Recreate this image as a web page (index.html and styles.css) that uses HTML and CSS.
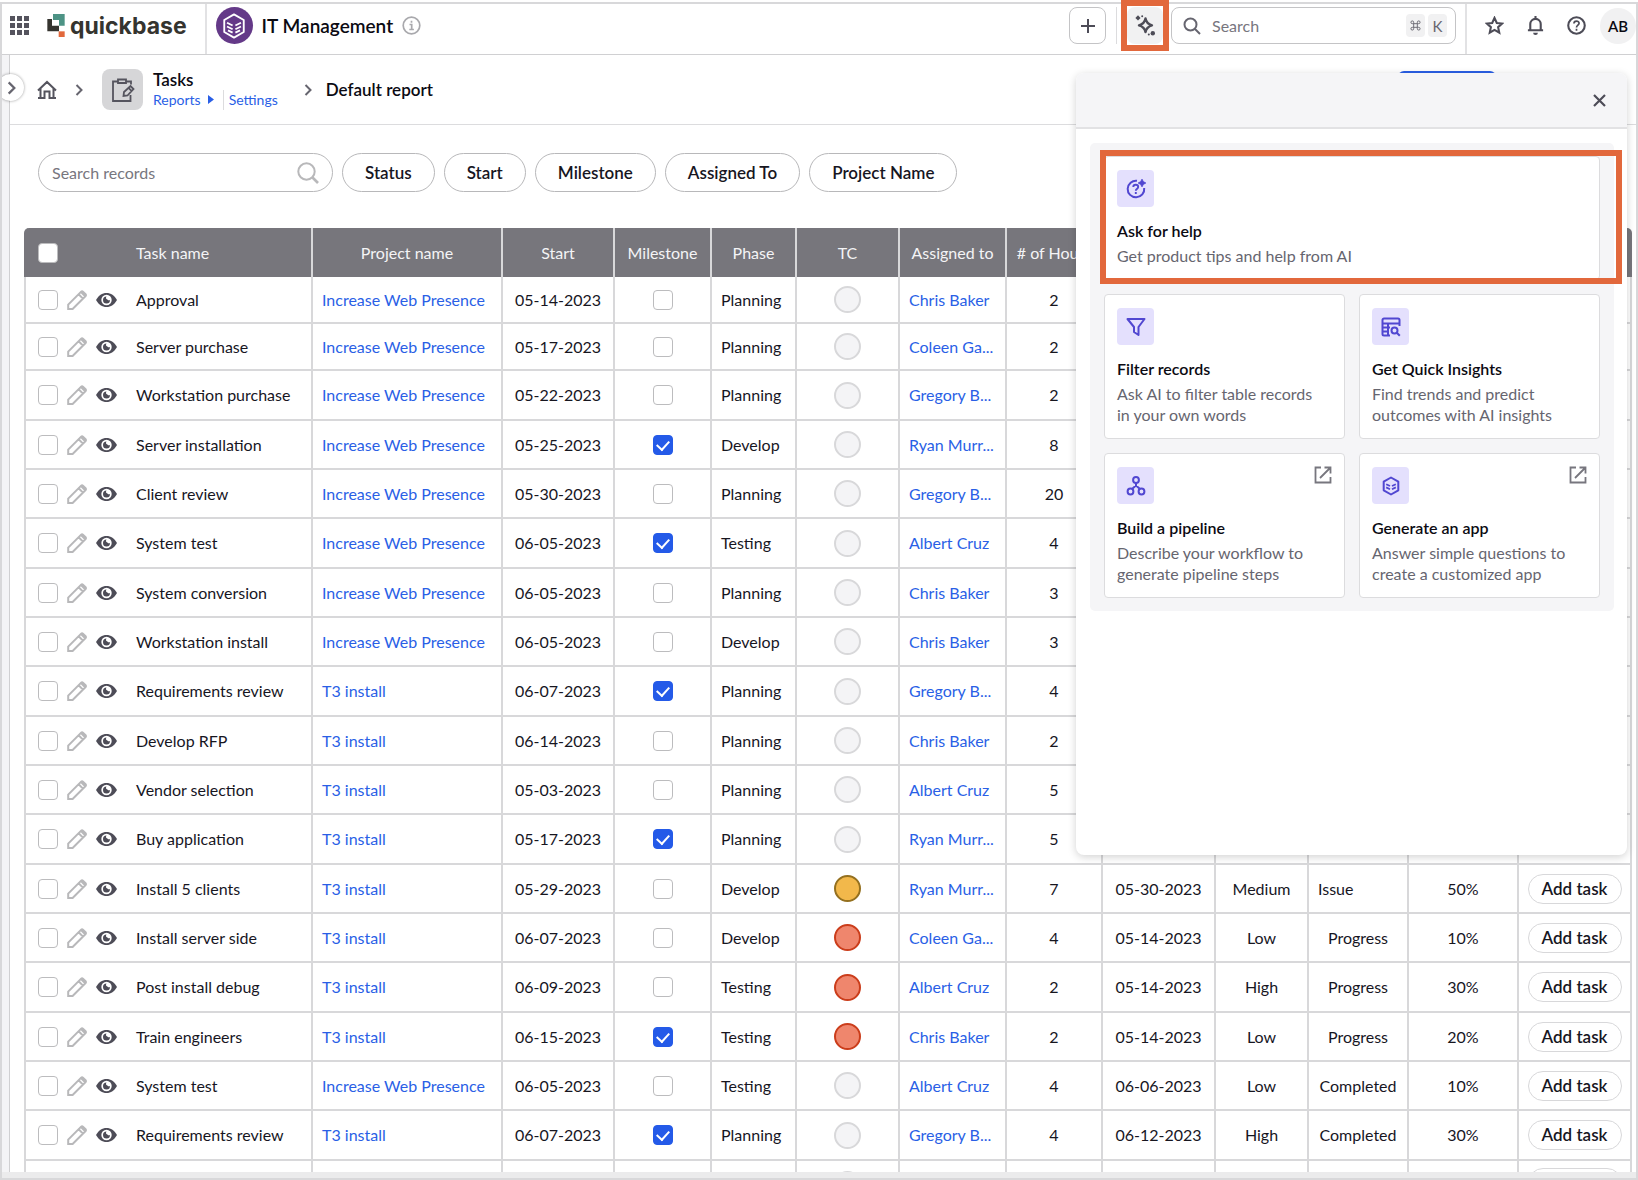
FILE: index.html
```html
<!DOCTYPE html>
<html lang="en">
<head>
    <meta charset="UTF-8">
    <meta name="viewport" content="width=device-width, initial-scale=1.0">
    <title>IT Management - Tasks</title>
    <link rel="stylesheet" href="styles.css">
</head>
<body>
    <!-- shared icons -->
    <svg class="sprite" aria-hidden="true">
        <symbol id="i-pencil" viewBox="0 0 20 20"><path d="M1.200 19v-4.400L14.200 1.600a1.200 1.200 0 0 1 1.700 0l2.700 2.700a1.200 1.200 0 0 1 0 1.700L5.600 19zM11.600 4.200l4.400 4.400M14 2l4.200 4.200" fill="none" stroke="#b8b8ba" stroke-width="2"/></symbol>
        <symbol id="i-eye" viewBox="0 0 21 14"><path d="M0 7C2.500 2.500 6.200 0 10.500 0S18.500 2.500 21 7c-2.500 4.500-6.200 7-10.500 7S2.500 11.500 0 7z" fill="#4d4c57"/><circle cx="10.500" cy="7" r="5.200" fill="#fff"/><path d="M10.500 3.500a3.500 3.500 0 1 0 3.500 3.500 2 2 0 0 1-2.600-.5 2 2 0 0 1-.9-3z" fill="#4d4c57"/></symbol>
        <symbol id="i-chevron" viewBox="0 0 8 12"><path d="M1.500 1l5 5-5 5" fill="none" stroke="#66656f" stroke-width="2"/></symbol>
        <symbol id="i-out" viewBox="0 0 18 18"><path d="M7 1.500H1.500v15h15V11M10.500 1.500h6v6M16.500 1.500L6 12" fill="none" stroke="#77767e" stroke-width="1.800"/></symbol>
        <symbol id="i-cube" viewBox="0 0 24 28"><path d="M12 1.500l10.500 6v13L12 26.500l-10.500-6v-13z" fill="none" stroke="currentColor" stroke-width="2" stroke-linejoin="round"/><path d="M4.500 10.500l6 3M4.500 14.500l6 3M5.500 18.800l5 2.400M19.500 10.500l-6 3M19.500 14.500l-6 3M18.500 18.800l-5 2.400" fill="none" stroke="currentColor" stroke-width="2"/></symbol>
        <symbol id="i-cube-sm" viewBox="0 0 18 20"><path d="M9 1.500l7.300 4.200v8.600L9 18.500l-7.300-4.200V5.700z" fill="none" stroke="currentColor" stroke-width="2" stroke-linejoin="round"/><path d="M4.200 8.200L8 10M4.200 11.400L8 13.200M13.800 8.200L10 10M13.800 11.400L10 13.200" fill="none" stroke="currentColor" stroke-width="1.800"/></symbol>
    </svg>

    <div class="frame">
        <header class="topbar">
            <button class="icon-btn apps" aria-label="Apps">
                <svg width="19" height="19" viewBox="0 0 19 19" fill="#55545e"><path d="M0 0h5v5H0zM7 0h5v5H7zM14 0h5v5h-5zM0 7h5v5H0zM7 7h5v5H7zM14 7h5v5h-5zM0 14h5v5H0zM7 14h5v5H7zM14 14h5v5h-5z"/></svg>
            </button>
            <a href="#" class="logo">
                <svg width="18" height="23" viewBox="140 42 52 69"><path d="M157 42h35v35h-17V60h-18z" fill="#4d9385"/><path d="M140 57h14v20h21v17h-35z" fill="#35342f"/><path d="M174 94h18v17h-18z" fill="#e2683c"/></svg>
                <span>quickbase</span>
            </a>
            <div class="app">
                <span class="app-icon"><svg width="24" height="26"><use href="#i-cube"/></svg></span>
                <h1>IT Management</h1>
                <svg width="19" height="19" viewBox="0 0 19 19" fill="none" stroke="#a9a9ad" stroke-width="1.700"><circle cx="9.500" cy="9.500" r="8.300"/><path d="M7.500 8.500h2.200v5M7.300 13.500h4.600M9.500 4.700v2"/></svg>
            </div>
            <div class="tools">
                <button class="add-btn" aria-label="New"><svg width="14" height="14" viewBox="0 0 14 14"><path d="M7 0v14M0 7h14" stroke="#4d4c57" stroke-width="2"/></svg></button>
                <button class="ai-btn" aria-label="AI assistant">
                    <svg width="21" height="21" viewBox="0 0 21 21"><path d="M10.500 3.500c.7 4 2.500 5.700 6.500 6.800-4 1.100-5.800 2.800-6.500 6.800-.7-4-2.500-5.700-6.500-6.800 4-1.100 5.800-2.800 6.500-6.800z" fill="none" stroke="#4d4c57" stroke-width="2.400" stroke-linejoin="round"/><path d="M3 .300l2.600 2.600L3 5.500.400 2.900z" fill="#4d4c57"/><circle cx="7.200" cy="1.300" r="1" fill="#4d4c57"/><circle cx="13.800" cy="19.500" r="1" fill="#4d4c57"/><circle cx="17.800" cy="18.300" r="2.200" fill="#4d4c57"/></svg>
                </button>
                <label class="global-search">
                    <svg width="18" height="18" viewBox="0 0 18 18" fill="none" stroke="#66656f" stroke-width="2"><circle cx="7.500" cy="7.500" r="6"/><path d="M12 12l5 5"/></svg>
                    <input type="text" placeholder="Search" aria-label="Search">
                    <kbd><svg width="11" height="11" viewBox="0 0 12 12" fill="none" stroke="#66656f" stroke-width="1"><path d="M4 4h4v4H4zM4 4V2.500A1.500 1.500 0 1 0 2.500 4H4M8 4h1.500A1.500 1.500 0 1 0 8 2.500V4M8 8v1.500A1.500 1.500 0 1 0 9.500 8H8M4 8H2.500A1.500 1.500 0 1 0 4 9.500V8"/></svg></kbd>
                    <kbd>K</kbd>
                </label>
            </div>
            <nav class="user">
                <button class="icon-btn" aria-label="Favorites"><svg width="19" height="19" viewBox="0 0 20 20"><path d="M10 2l2.400 5.300 5.600.6-4.200 3.900 1.200 5.700-5-2.900-5 2.900 1.200-5.700L2 7.900l5.600-.6z" fill="none" stroke="#4d4c57" stroke-width="2.200"/></svg></button>
                <button class="icon-btn" aria-label="Notifications"><svg width="19" height="19" viewBox="0 0 20 20"><path d="M2 15h16M4.500 15V8.500a5.500 5.500 0 0 1 11 0V15M10 0v3" fill="none" stroke="#4d4c57" stroke-width="2.200"/><path d="M7.500 17.500h5a2.500 2.500 0 0 1-5 0z" fill="#4d4c57"/></svg></button>
                <button class="icon-btn" aria-label="Help"><svg width="19" height="19" viewBox="0 0 20 20" fill="none" stroke="#4d4c57" stroke-width="2.200"><circle cx="10" cy="10" r="8.700"/><path d="M7.300 8c0-3.600 5.400-3.400 5.400-.3C12.700 9.500 10 9.700 10 12M10 13.500v2" stroke-width="1.800"/></svg></button>
                <button class="avatar">AB</button>
            </nav>
        </header>

        <div class="body">
            <aside class="rail">
                <button class="expand" aria-label="Expand navigation"><svg width="9" height="14"><use href="#i-chevron"/></svg></button>
            </aside>
            <main>
                <div class="crumbs">
                    <a href="#" class="home" aria-label="Home"><svg width="20" height="20" viewBox="0 0 20 20" fill="none" stroke="#55545e" stroke-width="2"><path d="M1 10.500L10 2l9 8.500M3.500 8.500V18H1M16.500 8.500V18H19M3 18h4.500v-6.500h5V18H17"/></svg></a>
                    <svg width="8" height="12"><use href="#i-chevron"/></svg>
                    <span class="tile"><svg width="24" height="24" viewBox="0 0 24 24" fill="none" stroke="#55545e" stroke-width="1.800"><path d="M7 3.500H2V23h17.500v-6M15 3.500h5v3M7 1.500h8V5H7zM12.500 18l.5-4 6.500-6 3 3-6 6.500zM17.500 9.800l3 3"/></svg></span>
                    <div class="table-nav">
                        <strong>Tasks</strong>
                        <div class="links">
                            <a href="#">Reports</a>
                            <svg width="6" height="9" viewBox="0 0 6 9"><path d="M0 0l6 4.500L0 9z" fill="#2a5fe6"/></svg>
                            <a href="#" class="settings">Settings</a>
                        </div>
                    </div>
                    <svg width="8" height="12"><use href="#i-chevron"/></svg>
                    <strong class="report">Default report</strong>
                    <button class="new-btn" aria-label="New task"></button>
                </div>

                <div class="filters">
                    <label class="record-search">
                        <input type="text" placeholder="Search records" aria-label="Search records">
                        <svg width="22" height="22" viewBox="0 0 22 22" fill="none" stroke="#b8b8ba" stroke-width="2"><circle cx="9.500" cy="9.500" r="8.200"/><path d="M15.500 15.500l5.500 5.500" stroke-width="2.600"/></svg>
                    </label>
                    <button class="pill">Status</button>
                    <button class="pill">Start</button>
                    <button class="pill">Milestone</button>
                    <button class="pill">Assigned To</button>
                    <button class="pill">Project Name</button>
                </div>

                <div class="table-wrap">
                    <table>
                        <colgroup>
                            <col class="c-task"><col class="c-project"><col class="c-start"><col class="c-mile"><col class="c-phase"><col class="c-tc"><col class="c-who"><col class="c-hours"><col class="c-end"><col class="c-prio"><col class="c-status"><col class="c-done"><col class="c-add">
                        </colgroup>
                        <thead>
                            <tr>
                                <th><div class="task"><input type="checkbox" class="check" aria-label="Select all"><span class="name">Task name</span></div></th>
                                <th>Project name</th>
                                <th>Start</th>
                                <th>Milestone</th>
                                <th>Phase</th>
                                <th>TC</th>
                                <th>Assigned to</th>
                                <th># of Hours</th>
                                <th></th>
                                <th></th>
                                <th></th>
                                <th></th>
                                <th></th>
                            </tr>
                        </thead>
                        <tbody id="rows"></tbody>
                    </table>
                </div>
            </main>
        </div>

        <section class="panel" aria-label="AI assistant">
            <div class="panel-head">
                <button class="icon-btn" aria-label="Close"><svg width="13" height="13" viewBox="0 0 13 13"><path d="M1 1l11 11M12 1L1 12" stroke="#4d4c57" stroke-width="2.200"/></svg></button>
            </div>
            <div class="cards">
                <a href="#" class="card wide">
                    <span class="badge"><svg width="20" height="20" viewBox="0 0 20 20" fill="none" stroke="#5147d1" stroke-width="2"><path d="M11 1.800A8.300 8.300 0 1 0 18.200 9"/><path d="M7.300 8c0-3 4.900-3 4.900 0 0 1.700-2.400 1.700-2.400 3.800M9.800 13v1.900" stroke-width="1.900"/><path d="M16 0l1.400 2.600L20 4l-2.600 1.400L16 8l-1.400-2.600L12 4l2.600-1.400z" fill="#5147d1" stroke="#5147d1" stroke-width=".6"/></svg></span>
                    <strong>Ask for help</strong>
                    <span class="desc">Get product tips and help from AI</span>
                </a>
                <a href="#" class="card">
                    <span class="badge"><svg width="20" height="20" viewBox="0 0 20 20"><path d="M1.500 2h17L12.500 10v8L8 15v-5z" fill="none" stroke="#5147d1" stroke-width="2" stroke-linejoin="round"/></svg></span>
                    <strong>Filter records</strong>
                    <span class="desc">Ask AI to filter table records in your own words</span>
                </a>
                <a href="#" class="card">
                    <span class="badge"><svg width="20" height="20" viewBox="0 0 20 20" fill="none" stroke="#5147d1" stroke-width="2"><path d="M18.500 9V3a1.500 1.500 0 0 0-1.500-1.500H3A1.500 1.500 0 0 0 1.500 3v14A1.500 1.500 0 0 0 3 18.500h6M1.500 6.500h17M7 6.500v12M1.500 10.500H9M1.500 14.500H7"/><circle cx="13.500" cy="13.500" r="3"/><path d="M15.800 15.800l3 3"/></svg></span>
                    <strong>Get Quick Insights</strong>
                    <span class="desc">Find trends and predict outcomes with AI insights</span>
                </a>
                <a href="#" class="card">
                    <span class="badge"><svg width="20" height="20" viewBox="0 0 20 20" fill="none" stroke="#5147d1" stroke-width="2"><circle cx="10" cy="4" r="2.900"/><circle cx="4.500" cy="15.500" r="2.900"/><circle cx="15.500" cy="15.500" r="2.900"/><path d="M10 7v3M10 9.500l-4 3.500M10 9.500l4 3.500"/></svg></span>
                    <svg class="out" width="18" height="18"><use href="#i-out"/></svg>
                    <strong>Build a pipeline</strong>
                    <span class="desc">Describe your workflow to generate pipeline steps</span>
                </a>
                <a href="#" class="card">
                    <span class="badge"><svg width="18" height="20"><use href="#i-cube-sm"/></svg></span>
                    <svg class="out" width="18" height="18"><use href="#i-out"/></svg>
                    <strong>Generate an app</strong>
                    <span class="desc">Answer simple questions to create a customized app</span>
                </a>
            </div>
        </section>
    </div>

    <script src="script.js"></script>
</body>
</html>
```

FILE: styles.css
```css
* {
    box-sizing: border-box;
}
body {
    margin: 0;
    overflow: hidden;
    background: #fff;
    color: #17161f;
    font-family: Lato, "Open Sans", sans-serif;
    font-size: 16px;
    line-height: 20px;
}
button, input {
    font: inherit;
    color: inherit;
}
button {
    cursor: pointer;
    background: none;
    border: none;
    padding: 0;
}
svg {
    display: block;
    flex: none;
}
a {
    color: #2a5fe6;
    text-decoration: none;
}
strong {
    font-weight: 600;
    color: #0b0a12;
}
.sprite {
    position: absolute;
    width: 0;
    height: 0;
}
.frame {
    position: relative;
    display: flex;
    flex-direction: column;
    height: calc(100vh - 2px);
    margin-top: 2px;
    border: 2px solid #d8d8da;
}

/* top bar */
.topbar {
    display: flex;
    flex: none;
    height: 51px;
    border-bottom: 1px solid #d0d0d2;
}
.topbar > * {
    padding-top: 3px;
    padding-bottom: 10px;
}
.icon-btn {
    display: flex;
    align-items: center;
    justify-content: center;
}
.apps {
    padding-left: 8px;
}
.logo {
    display: flex;
    align-items: center;
    gap: 5px;
    padding-left: 18px;
    padding-right: 18px;
    border-right: 2px solid #e2e2e4;
    color: #35342f;
    font-family: Inter, sans-serif;
    font-size: 23px;
    font-weight: 700;
}
.app {
    display: flex;
    align-items: center;
    gap: 9px;
    padding-left: 9px;
}
.app-icon {
    display: flex;
    align-items: center;
    justify-content: center;
    width: 37px;
    height: 37px;
    border-radius: 50%;
    background: #643988;
    color: #fff;
}
h1 {
    margin: 0;
    font-size: 19px;
    font-weight: 600;
    color: #0b0a12;
}
.tools {
    display: flex;
    margin-left: auto;
    padding-right: 9px;
    border-right: 2px solid #e2e2e4;
}
.add-btn {
    display: flex;
    align-items: center;
    justify-content: center;
    width: 37px;
    border: 1px solid #c4c4c6;
    border-radius: 8px;
}
.ai-btn {
    position: relative;
    display: flex;
    align-items: center;
    justify-content: center;
    width: 36px;
    margin: 0 8px 0 21px;
    background: #f1f1f2;
    border-radius: 8px;
}
.add-btn + .ai-btn::before {
    content: "";
    position: absolute;
    left: -11px;
    top: 0;
    bottom: 0;
    width: 1px;
    background: #dcdcde;
}
.ai-btn::after,
.wide::after {
    content: "";
    position: absolute;
    border: 6px solid #e2683c;
}
.ai-btn::after {
    inset: -7px -6px;
}
.global-search {
    display: flex;
    align-items: center;
    gap: 3px;
    width: 285px;
    padding: 0 8px 0 11px;
    border: 1px solid #c4c4c6;
    border-radius: 8px;
}
.global-search input,
.record-search input {
    flex: 1;
    min-width: 0;
    padding: 0;
    border: none;
    outline: none;
    background: none;
}
.global-search input {
    padding-left: 8px;
}
::placeholder {
    color: #77767e;
    opacity: 1;
}
kbd {
    display: flex;
    align-items: center;
    justify-content: center;
    width: 19px;
    height: 23px;
    border-radius: 4px;
    background: #f1f1f2;
    color: #66656f;
    font-family: inherit;
    font-size: 15px;
}
.user {
    display: flex;
    align-items: center;
    gap: 22px;
    padding-left: 18px;
}
.avatar {
    width: 36px;
    height: 36px;
    margin-left: -8px;
    border-radius: 50%;
    background: #f1f1f2;
    color: #0b0a12;
    font-size: 15px;
    font-weight: 600;
}

/* page body */
.body {
    display: flex;
    flex: 1;
    min-height: 0;
    border-bottom: 6px solid #ebebec;
}
.rail {
    position: relative;
    flex: none;
    width: 8px;
    background: #f4f4f6;
    border-right: 1px solid #d0d0d2;
}
.expand {
    position: absolute;
    z-index: 1;
    left: -5px;
    top: 19px;
    width: 27px;
    height: 27px;
    padding-left: 10px;
    border-radius: 50%;
    background: #fff;
    box-shadow: 0 0 3px rgba(0, 0, 0, 0.4);
    clip-path: inset(-4px -4px -4px 5px);
}
main {
    flex: 1;
    min-width: 0;
    overflow: hidden;
}
.crumbs {
    position: relative;
    display: flex;
    align-items: center;
    height: 70px;
    padding-left: 27px;
    border-bottom: 1px solid #dcdcde;
}
.crumbs strong,
.pill,
.add-task {
    font-size: 17px;
}
.home {
    margin-right: 18px;
}
.tile {
    display: flex;
    align-items: center;
    justify-content: center;
    width: 41px;
    height: 41px;
    margin: 0 10px 0 19px;
    border-radius: 8px;
    background: #d6d6d8;
}
.table-nav {
    margin-right: 26px;
}
.links {
    display: flex;
    align-items: center;
    gap: 7px;
    font-size: 14px;
}
.settings {
    margin-left: 2px;
    padding-left: 5px;
    border-left: 1px solid #dcdcde;
}
.report {
    margin-left: 14px;
}
.new-btn {
    position: absolute;
    top: 16px;
    right: 140px;
    width: 98px;
    height: 37px;
    border-radius: 6px;
    background: #2a5fe6;
}
.filters {
    display: flex;
    gap: 9px;
    padding: 28px 28px 36px;
}
.record-search {
    display: flex;
    align-items: center;
    width: 295px;
    height: 39px;
    padding: 0 13px;
    border: 1px solid #b8b8ba;
    border-radius: 20px;
}
.pill {
    height: 39px;
    padding: 0 22px;
    border: 1px solid #b8b8ba;
    border-radius: 20px;
    font-weight: 600;
}

/* records table */
.table-wrap {
    padding: 0 4px 0 14px;
}
table {
    width: 100%;
    table-layout: fixed;
    border-collapse: separate;
    border-spacing: 0;
}
.c-task { width: 289px; }
.c-project { width: 190px; }
.c-start { width: 112px; }
.c-mile { width: 97px; }
.c-phase { width: 85px; }
.c-tc { width: 103px; }
.c-who { width: 107px; }
.c-hours { width: 96px; }
.c-end { width: 113px; }
.c-prio { width: 93px; }
.c-status { width: 100px; }
.c-done { width: 110px; }
.c-add { width: 113px; }
th {
    height: 49px;
    padding: 0;
    background: #77767c;
    border-right: 2px solid #d8d8da;
    color: #f4f4f6;
    font-weight: 400;
    white-space: nowrap;
}
th:first-child {
    border-left: 2px solid #77767c;
    border-top-left-radius: 5px;
}
th:last-child {
    border-right: none;
    border-top-right-radius: 5px;
}
td {
    height: 49px;
    padding: 0;
    border-right: 2px solid #d8d8da;
    border-bottom: 2px solid #d8d8da;
    text-align: center;
    white-space: nowrap;
}
td:first-child {
    border-left: 2px solid #d8d8da;
}
tr:nth-child(-n+2) td {
    height: 47px;
}
tr:nth-child(3n) td {
    height: 50px;
}
td.left {
    padding-left: 9px;
    text-align: left;
}
.task {
    display: flex;
    align-items: center;
    gap: 9px;
    padding-left: 12px;
}
.task .name {
    margin-left: 10px;
}
th .name {
    padding-left: 59px;
}
.check {
    display: block;
    flex: none;
    appearance: none;
    width: 20px;
    height: 20px;
    margin: 0;
    border: 1px solid #bcbcbe;
    border-radius: 4px;
    background: #fff;
}
td > .check {
    margin: 0 auto;
}
.check:checked {
    border-color: #245ae8;
    background: #245ae8;
}
.check:checked::after {
    content: "";
    display: block;
    width: 6px;
    height: 10px;
    margin: 2px auto;
    border: solid #fff;
    border-width: 0 2px 2px 0;
    transform: rotate(42deg);
}
.dot {
    display: block;
    width: 27px;
    height: 27px;
    margin: 0 auto;
    border: 2px solid #d8d8da;
    border-radius: 50%;
    background: #f4f4f6;
}
.dot.amber {
    border-color: #94701f;
    background: #f2b84b;
}
.dot.red {
    border-color: #cb3d1b;
    background: #ef866d;
}
.add-task {
    width: 94px;
    height: 30px;
    border: 1px solid #d8d8da;
    border-radius: 15px;
    font-weight: 600;
}

/* AI panel */
.panel {
    position: absolute;
    z-index: 2;
    top: 69px;
    right: 9px;
    width: 551px;
    height: 782px;
    border-radius: 8px;
    background: #fff;
    box-shadow: 0 2px 8px rgba(0, 0, 0, 0.18);
}
.panel-head {
    display: flex;
    justify-content: flex-end;
    height: 56px;
    padding-right: 21px;
    border-bottom: 2px solid #e2e2e4;
    border-radius: 8px 8px 0 0;
    background: #f5f5f7;
}
.cards {
    display: grid;
    grid-template-columns: 1fr 1fr;
    gap: 14px;
    margin: 14px 13px 0 14px;
    padding: 13px 14px;
    border-radius: 5px;
    background: #f5f5f7;
}
.card {
    position: relative;
    display: flex;
    flex-direction: column;
    padding: 13px 12px;
    border: 1px solid #dcdcde;
    border-radius: 4px;
    background: #fff;
    color: #66656f;
}
.wide {
    grid-column: span 2;
}
.wide::after {
    inset: -7px -23px -5px -5px;
}
.badge {
    display: flex;
    align-items: center;
    justify-content: center;
    width: 37px;
    height: 37px;
    border-radius: 4px;
    background: #e4e0fd;
    color: #5147d1;
}
.card strong {
    margin-top: 12px;
    line-height: 24px;
}
.desc {
    margin-top: 2px;
    padding-right: 8px;
    line-height: 21px;
}
.out {
    position: absolute;
    top: 12px;
    right: 12px;
}
```

FILE: script.js
```js
const IWP = 'Increase Web Presence';
const T3 = 'T3 install';

// task, project, start, milestone, phase, light, assignee, hours, end, priority, status, done
const tasks = [
    ['Approval', IWP, '05-14-2023', 0, 'Planning', '', 'Chris Baker', 2],
    ['Server purchase', IWP, '05-17-2023', 0, 'Planning', '', 'Coleen Ga...', 2],
    ['Workstation purchase', IWP, '05-22-2023', 0, 'Planning', '', 'Gregory B...', 2],
    ['Server installation', IWP, '05-25-2023', 1, 'Develop', '', 'Ryan Murr...', 8],
    ['Client review', IWP, '05-30-2023', 0, 'Planning', '', 'Gregory B...', 20],
    ['System test', IWP, '06-05-2023', 1, 'Testing', '', 'Albert Cruz', 4],
    ['System conversion', IWP, '06-05-2023', 0, 'Planning', '', 'Chris Baker', 3],
    ['Workstation install', IWP, '06-05-2023', 0, 'Develop', '', 'Chris Baker', 3],
    ['Requirements review', T3, '06-07-2023', 1, 'Planning', '', 'Gregory B...', 4],
    ['Develop RFP', T3, '06-14-2023', 0, 'Planning', '', 'Chris Baker', 2],
    ['Vendor selection', T3, '05-03-2023', 0, 'Planning', '', 'Albert Cruz', 5],
    ['Buy application', T3, '05-17-2023', 1, 'Planning', '', 'Ryan Murr...', 5],
    ['Install 5 clients', T3, '05-29-2023', 0, 'Develop', 'amber', 'Ryan Murr...', 7, '05-30-2023', 'Medium', 'Issue', '50%'],
    ['Install server side', T3, '06-07-2023', 0, 'Develop', 'red', 'Coleen Ga...', 4, '05-14-2023', 'Low', 'Progress', '10%'],
    ['Post install debug', T3, '06-09-2023', 0, 'Testing', 'red', 'Albert Cruz', 2, '05-14-2023', 'High', 'Progress', '30%'],
    ['Train engineers', T3, '06-15-2023', 1, 'Testing', 'red', 'Chris Baker', 2, '05-14-2023', 'Low', 'Progress', '20%'],
    ['System test', IWP, '06-05-2023', 0, 'Testing', '', 'Albert Cruz', 4, '06-06-2023', 'Low', 'Completed', '10%'],
    ['Requirements review', T3, '06-07-2023', 1, 'Planning', '', 'Gregory B...', 4, '06-12-2023', 'High', 'Completed', '30%'],
    ['', '', '', 0, '', '', '', '', '', '', '', '']
];

document.getElementById('rows').innerHTML = tasks.map(t => {
    const [name, project, start, milestone, phase, light, who, hours, end, priority = '', status = '', done = ''] = t;
    const button = end === undefined ? '' : `<button class="add-task">${end ? 'Add task' : ''}</button>`;
    return `<tr>
        <td><div class="task">
            <input type="checkbox" class="check" aria-label="Select ${name}">
            <svg width="20" height="20"><use href="#i-pencil"/></svg>
            <svg width="21" height="14"><use href="#i-eye"/></svg>
            <span class="name">${name}</span>
        </div></td>
        <td class="left"><a href="#">${project}</a></td>
        <td>${start}</td>
        <td><input type="checkbox" class="check" aria-label="Milestone" ${milestone ? 'checked' : ''}></td>
        <td class="left">${phase}</td>
        <td><span class="dot ${light}"></span></td>
        <td class="left"><a href="#">${who}</a></td>
        <td>${hours}</td>
        <td>${end || ''}</td>
        <td>${priority}</td>
        <td class="${status === 'Issue' ? 'left' : ''}">${status}</td>
        <td>${done}</td>
        <td>${button}</td>
    </tr>`;
}).join('');
```
